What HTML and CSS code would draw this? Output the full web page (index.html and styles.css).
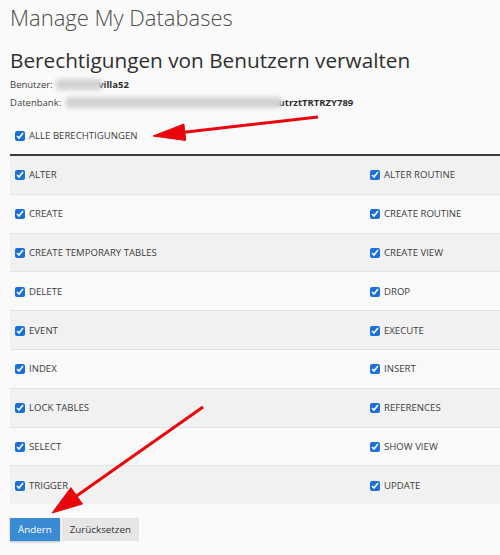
FILE: index.html
```html
<!DOCTYPE html>
<html lang="de">
<head>
<meta charset="utf-8">
<title>Manage My Databases</title>
<link rel="stylesheet" href="styles.css">
</head>
<body>
<main class="page">
  <h1 class="page-title">Manage My Databases</h1>
  <h2 class="section-title">Berechtigungen von Benutzern verwalten</h2>
  <p class="meta">Benutzer: <span class="redacted redacted-user"></span><b>villa52</b></p>
  <p class="meta">Datenbank: <span class="redacted redacted-db"></span><b>utrztTRTRZY789</b></p>

  <label class="check check-all"><input type="checkbox" checked> ALLE BERECHTIGUNGEN</label>

  <div class="privileges">
    <div class="row"><label class="check"><input type="checkbox" checked> ALTER</label><label class="check"><input type="checkbox" checked> ALTER ROUTINE</label></div>
    <div class="row"><label class="check"><input type="checkbox" checked> CREATE</label><label class="check"><input type="checkbox" checked> CREATE ROUTINE</label></div>
    <div class="row"><label class="check"><input type="checkbox" checked> CREATE TEMPORARY TABLES</label><label class="check"><input type="checkbox" checked> CREATE VIEW</label></div>
    <div class="row"><label class="check"><input type="checkbox" checked> DELETE</label><label class="check"><input type="checkbox" checked> DROP</label></div>
    <div class="row"><label class="check"><input type="checkbox" checked> EVENT</label><label class="check"><input type="checkbox" checked> EXECUTE</label></div>
    <div class="row"><label class="check"><input type="checkbox" checked> INDEX</label><label class="check"><input type="checkbox" checked> INSERT</label></div>
    <div class="row"><label class="check"><input type="checkbox" checked> LOCK TABLES</label><label class="check"><input type="checkbox" checked> REFERENCES</label></div>
    <div class="row"><label class="check"><input type="checkbox" checked> SELECT</label><label class="check"><input type="checkbox" checked> SHOW VIEW</label></div>
    <div class="row"><label class="check"><input type="checkbox" checked> TRIGGER</label><label class="check"><input type="checkbox" checked> UPDATE</label></div>
  </div>

  <div class="actions">
    <button class="btn btn-primary" type="button">Ändern</button>
    <button class="btn" type="button">Zurücksetzen</button>
  </div>
</main>

<!-- hand-drawn callout arrows -->
<svg class="callouts" width="500" height="555" viewBox="0 0 500 555">
  <g fill="#e8060c" stroke="#e8060c">
    <line x1="318" y1="117" x2="182" y2="132.5" stroke-width="3"/>
    <polygon points="153,136 185.7,140.5 183.9,124" stroke-width="1"/>
    <line x1="203" y1="407" x2="75" y2="497" stroke-width="3"/>
    <polygon points="52,513 82.5,504 70.9,487.6" stroke-width="1"/>
  </g>
</svg>
</body>
</html>
```

FILE: styles.css
```css
html, body {
  margin: 0;
  padding: 0;
  background: #fafafa;
}

body {
  font-family: "Open Sans", "DejaVu Sans", sans-serif;
  color: #444;
  width: 500px;
  height: 555px;
  overflow: hidden;
  position: relative;
}

.page {
  padding-left: 10px;
}

.page-title {
  margin: 0;
  padding-top: 2px;
  font-size: 22px;
  line-height: 31px;
  font-weight: 300;
  color: #4d4d4d;
}

.section-title {
  margin: 13px 0 2px;
  font-size: 20.75px;
  line-height: 28px;
  font-weight: 400;
  color: #2f2f2f;
}

.meta {
  margin: 0;
  font-size: 9.5px;
  line-height: 18px;
  color: #3d3d3d;
  white-space: nowrap;
}

.meta b {
  font-weight: 700;
  color: #2d2d2d;
}

.redacted {
  display: inline-block;
  height: 11px;
  vertical-align: -2px;
  background: #d2d2d2;
  filter: blur(2px);
  border-radius: 3px;
}

.redacted-user {
  width: 46px;
  margin: 0 -4px 0 1px;
}

.redacted-db {
  width: 216px;
  margin: 0 -3px 0 2px;
}

.check {
  display: flex;
  align-items: center;
  gap: 4px;
  font-size: 9.6px;
  line-height: 18px;
  color: #3d3d3d;
  white-space: nowrap;
}

.check input {
  width: 10px;
  height: 10px;
  margin: 0;
  accent-color: #1a6fdc;
}

.check-all {
  margin: 14.5px 0 9.5px;
  padding-left: 5px;
}

.privileges {
  border-top: 2px solid #3a3a3a;
  display: grid;
}

.row {
  display: grid;
  grid-template-columns: 355px 1fr;
  height: 37.8px;
  border-bottom: 1px solid #e3e3e3;
  background: #f9f9f9;
}

.row:nth-child(odd) {
  background: #f1f1f1;
}

.row:last-child {
  border-bottom: 0;
}

.row .check {
  padding: 1px 0 0 5px;
}

.actions {
  display: flex;
  gap: 2px;
  margin-top: 14px;
}

.btn {
  height: 23px;
  padding: 0 8px;
  border: 0;
  border-radius: 0;
  font-family: inherit;
  font-size: 9.8px;
  color: #333;
  background: #e6e6e6;
}

.btn-primary {
  color: #fff;
  background: #3a8ad4;
  box-shadow: 0 1px 2px rgba(0, 0, 0, 0.25);
}

.callouts {
  position: absolute;
  top: 0;
  left: 0;
  pointer-events: none;
}
```
